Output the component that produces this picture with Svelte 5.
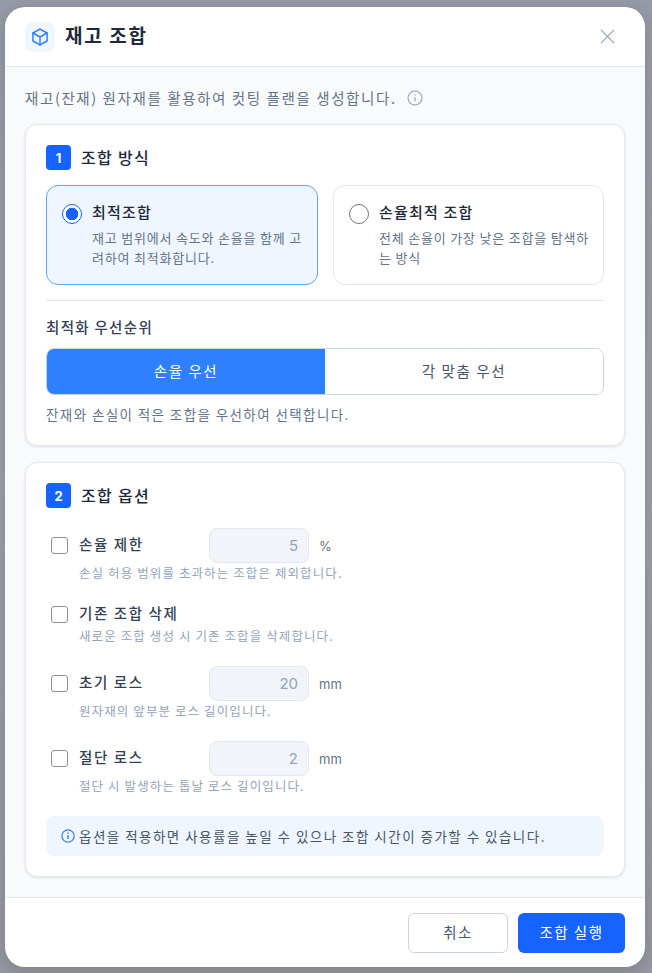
<script>
	let method = $state('best');
	let priority = $state('loss');

	const methods = [
		{ id: 'best', title: '최적조합', desc: '재고 범위에서 속도와 손율을 함께 고려하여 최적화합니다.' },
		{ id: 'loss', title: '손율최적 조합', desc: '전체 손율이 가장 낮은 조합을 탐색하는 방식' }
	];

	const options = [
		{ label: '손율 제한', value: '5', unit: '%', hint: '손실 허용 범위를 초과하는 조합은 제외합니다.' },
		{ label: '기존 조합 삭제', hint: '새로운 조합 생성 시 기존 조합을 삭제합니다.' },
		{ label: '초기 로스', value: '20', unit: 'mm', hint: '원자재의 앞부분 로스 길이입니다.' },
		{ label: '절단 로스', value: '2', unit: 'mm', hint: '절단 시 발생하는 톱날 로스 길이입니다.' }
	];
</script>

<div class="backdrop">
	<div class="modal">
		<header class="head">
			<span class="head-icon">
				<svg width="20" height="20" viewBox="0 0 24 24" fill="none" stroke="currentColor" stroke-width="1.8" stroke-linejoin="round" stroke-linecap="round">
					<path d="M12 2.500 20.500 7.200v9.600L12 21.500 3.500 16.800V7.200Z" />
					<path d="M3.500 7.200 12 12l8.500-4.800M12 12v9.500" />
				</svg>
			</span>
			<h1>재고 조합</h1>
			<button class="close" aria-label="닫기">
				<svg width="15" height="15" viewBox="0 0 16 16" fill="none" stroke="currentColor" stroke-width="1.300">
					<path d="M1 1l14 14M15 1L1 15" />
				</svg>
			</button>
		</header>

		<div class="body">
			<p class="intro">
				재고(잔재) 원자재를 활용하여 컷팅 플랜을 생성합니다.
				<svg width="16" height="16" viewBox="0 0 16 16" fill="none" stroke="#94a3b8" stroke-width="1.100">
					<circle cx="8" cy="8" r="7" />
					<path d="M8 7.200v4M8 4.500v1.100" stroke-width="1.300" />
				</svg>
			</p>

			<section class="card">
				<div class="card-title"><span class="badge">1</span><span class="card-name">조합 방식</span></div>
				<div class="methods">
					{#each methods as m}
						<button class="method" class:on={method === m.id} onclick={() => (method = m.id)}>
							<span class="radio"></span>
							<span class="method-text">
								<strong>{m.title}</strong>
								<small>{m.desc}</small>
							</span>
						</button>
					{/each}
				</div>
				<hr />
				<div class="sub-label">최적화 우선순위</div>
				<div class="segment">
					<button class:on={priority === 'loss'} onclick={() => (priority = 'loss')}>손율 우선</button>
					<button class:on={priority === 'angle'} onclick={() => (priority = 'angle')}>각 맞춤 우선</button>
				</div>
				<p class="note">잔재와 손실이 적은 조합을 우선하여 선택합니다.</p>
			</section>

			<section class="card second">
				<div class="card-title"><span class="badge">2</span><span class="card-name">조합 옵션</span></div>
				<div class="options">
					{#each options as o}
						<div class="option">
							<label class="option-row">
								<input type="checkbox" />
								<span class="option-label">{o.label}</span>
								{#if o.value}
									<input class="num" type="text" value={o.value} disabled />
									<span class="unit">{o.unit}</span>
								{/if}
							</label>
							<div class="hint">{o.hint}</div>
						</div>
					{/each}
				</div>
				<div class="tip">
					<svg width="14" height="14" viewBox="0 0 16 16" fill="none" stroke="#2f80ff" stroke-width="1.400">
						<circle cx="8" cy="8" r="7" />
						<path d="M8 7v4.500M8 4v1.300" stroke-width="1.700" />
					</svg>
					<span>옵션을 적용하면 사용률을 높일 수 있으나 조합 시간이 증가할 수 있습니다.</span>
				</div>
			</section>
		</div>

		<footer class="foot">
			<button class="btn ghost">취소</button>
			<button class="btn primary">조합 실행</button>
		</footer>
	</div>
</div>

<style>
	:global(body) {
		margin: 0;
		background: #9a9ea8;
		font-family: 'Noto Sans CJK KR', 'Inter', sans-serif;
	}
	.backdrop {
		padding: 7px 7px 6px 5px;
		height: 960px;
		background: linear-gradient(#959aa6, #9b9ea8 50%, #94979f);
	}
	.modal {
		height: 960px;
		background: #fff;
		border-radius: 20px;
		overflow: hidden;
		display: flex;
		flex-direction: column;
		box-shadow: 0 4px 16px rgba(0, 0, 0, 0.15);
	}
	.head {
		height: 59px;
		flex: none;
		display: flex;
		align-items: center;
		padding: 0 20px;
		border-bottom: 1px solid #e2e8f0;
		box-sizing: content-box;
	}
	.head-icon {
		width: 30px;
		height: 30px;
		border-radius: 8px;
		background: #eff6ff;
		color: #2f80ff;
		display: flex;
		align-items: center;
		justify-content: center;
		margin-right: 10px;
	}
	h1 {
		margin: 0 0 5px;
		font-size: 19px;
		letter-spacing: 1.700px;
		font-weight: 700;
		color: #1e293b;
		flex: 1;
	}
	.close {
		border: 0;
		background: none;
		color: #94a3b8;
		padding: 0;
		display: flex;
		margin-right: 10px;
	}
	.body {
		flex: 1;
		background: #f8fafc;
		padding: 20px 20px 0;
	}
	.intro {
		margin: 0 0 16px;
		font-size: 14.500px;
		letter-spacing: 1.600px;
		line-height: 21px;
		color: #64748b;
		display: flex;
		align-items: center;
		gap: 10px;
	}
	.card {
		background: #fff;
		border: 1px solid #e2e8f0;
		border-radius: 12px;
		padding: 20px;
		box-shadow: 0 1px 3px rgba(0, 0, 0, 0.1);
		height: 322px;
		box-sizing: border-box;
	}
	.card.second {
		margin-top: 16px;
		height: 415px;
	}
	.card-title {
		display: flex;
		align-items: center;
		gap: 10px;
		height: 25px;
		font-size: 16px;
		letter-spacing: 1.300px;
		font-weight: 500;
		color: #1e293b;
	}
	.card-name {
		padding-bottom: 2px;
	}
	.badge {
		width: 25px;
		height: 25px;
		border-radius: 4px;
		background: #1763ff;
		color: #fff;
		font-size: 13px;
		letter-spacing: 0;
		font-weight: 700;
		font-family: 'Inter', sans-serif;
		display: flex;
		align-items: center;
		justify-content: center;
	}
	.methods {
		display: grid;
		grid-template-columns: 272px 271px;
		gap: 15px;
		margin-top: 15px;
	}
	.method {
		height: 100px;
		box-sizing: border-box;
		display: flex;
		gap: 10px;
		align-items: flex-start;
		text-align: left;
		padding: 15px 12px 15px 15px;
		background: #fff;
		border: 1px solid #e2e8f0;
		border-radius: 12px;
		font-family: inherit;
	}
	.method.on {
		background: #eff6ff;
		border-color: #60a5fa;
	}
	.radio {
		flex: none;
		width: 20px;
		height: 20px;
		box-sizing: border-box;
		border-radius: 50%;
		border: 1.500px solid #767676;
		margin-top: 3px;
		background: #fff;
	}
	.on .radio {
		border-color: #1763ff;
		background: radial-gradient(circle, #1763ff 0 6px, #fff 6.500px);
	}
	.method-text {
		display: flex;
		flex-direction: column;
	}
	.method-text strong {
		font-size: 15px;
		letter-spacing: 1.200px;
		line-height: 21px;
		font-weight: 500;
		color: #1e293b;
	}
	.method-text small {
		font-size: 13px;
		letter-spacing: 0.800px;
		line-height: 20px;
		color: #64748b;
		margin-top: 6px;
	}
	hr {
		border: 0;
		border-top: 1px solid #e2e8f0;
		margin: 15px 0 0;
	}
	.sub-label {
		margin-top: 15px;
		font-size: 14.500px;
		letter-spacing: 1.300px;
		line-height: 21px;
		font-weight: 500;
		color: #334155;
	}
	.segment {
		display: flex;
		margin-top: 11px;
		height: 47px;
		box-sizing: border-box;
		border: 1px solid #cbd5e1;
		border-radius: 8px;
		overflow: hidden;
	}
	.segment button {
		flex: 1;
		border: 0;
		background: #fff;
		color: #475569;
		font-size: 14.500px;
		letter-spacing: 1.600px;
		font-family: inherit;
		padding: 0 0 3px;
	}
	.segment button.on {
		background: #2f80ff;
		color: #fff;
	}
	.note {
		margin: 9px 0 0;
		font-size: 13.500px;
		letter-spacing: 1.400px;
		line-height: 20px;
		color: #64748b;
	}
	.options {
		margin-top: 20px;
		padding-left: 5px;
	}
	.option {
		margin-bottom: 20px;
	}
	.option-row {
		display: flex;
		align-items: center;
		min-height: 23px;
	}
	.option-row input[type='checkbox'] {
		appearance: none;
		width: 17px;
		height: 17px;
		margin: 0 11px 0 0;
		border: 1.500px solid #8f8f8f;
		border-radius: 3px;
		background: #fff;
	}
	.option-label {
		width: 130px;
		font-size: 14.500px;
		letter-spacing: 1.600px;
		line-height: 20px;
		font-weight: 500;
		color: #334155;
		padding-bottom: 3px;
	}
	.num {
		width: 100px;
		height: 35px;
		box-sizing: border-box;
		padding: 0 10px;
		border: 1px solid #e2e8f0;
		border-radius: 8px;
		background: #f1f5f9;
		color: #94a3b8;
		font-size: 15px;
		font-family: 'Inter', sans-serif;
		text-align: right;
		opacity: 1;
	}
	.unit {
		margin-left: 10px;
		font-size: 13px;
		color: #64748b;
		font-family: 'Inter', sans-serif;
	}
	.hint {
		margin-left: 28px;
		font-size: 12.500px;
		letter-spacing: 1.100px;
		line-height: 20px;
		color: #94a3b8;
	}
	.tip {
		height: 40px;
		box-sizing: border-box;
		display: flex;
		align-items: center;
		gap: 4px;
		padding: 0 15px;
		background: #eff6ff;
		border-radius: 8px;
		font-size: 13.500px;
		letter-spacing: 1.470px;
		color: #475569;
	}
	.foot {
		height: 69px;
		box-sizing: content-box;
		flex: none;
		border-top: 1px solid #e2e8f0;
		display: flex;
		justify-content: flex-end;
		align-items: center;
		gap: 10px;
		padding: 0 20px;
	}
	.btn {
		height: 40px;
		border-radius: 6px;
		font-size: 14.500px;
		letter-spacing: 1.500px;
		font-family: inherit;
		padding: 0 0 3px;
	}
	.ghost {
		width: 100px;
		background: #fff;
		border: 1px solid #cbd5e1;
		color: #475569;
	}
	.primary {
		width: 107px;
		background: #1763ff;
		border: 0;
		color: #fff;
	}
</style>
